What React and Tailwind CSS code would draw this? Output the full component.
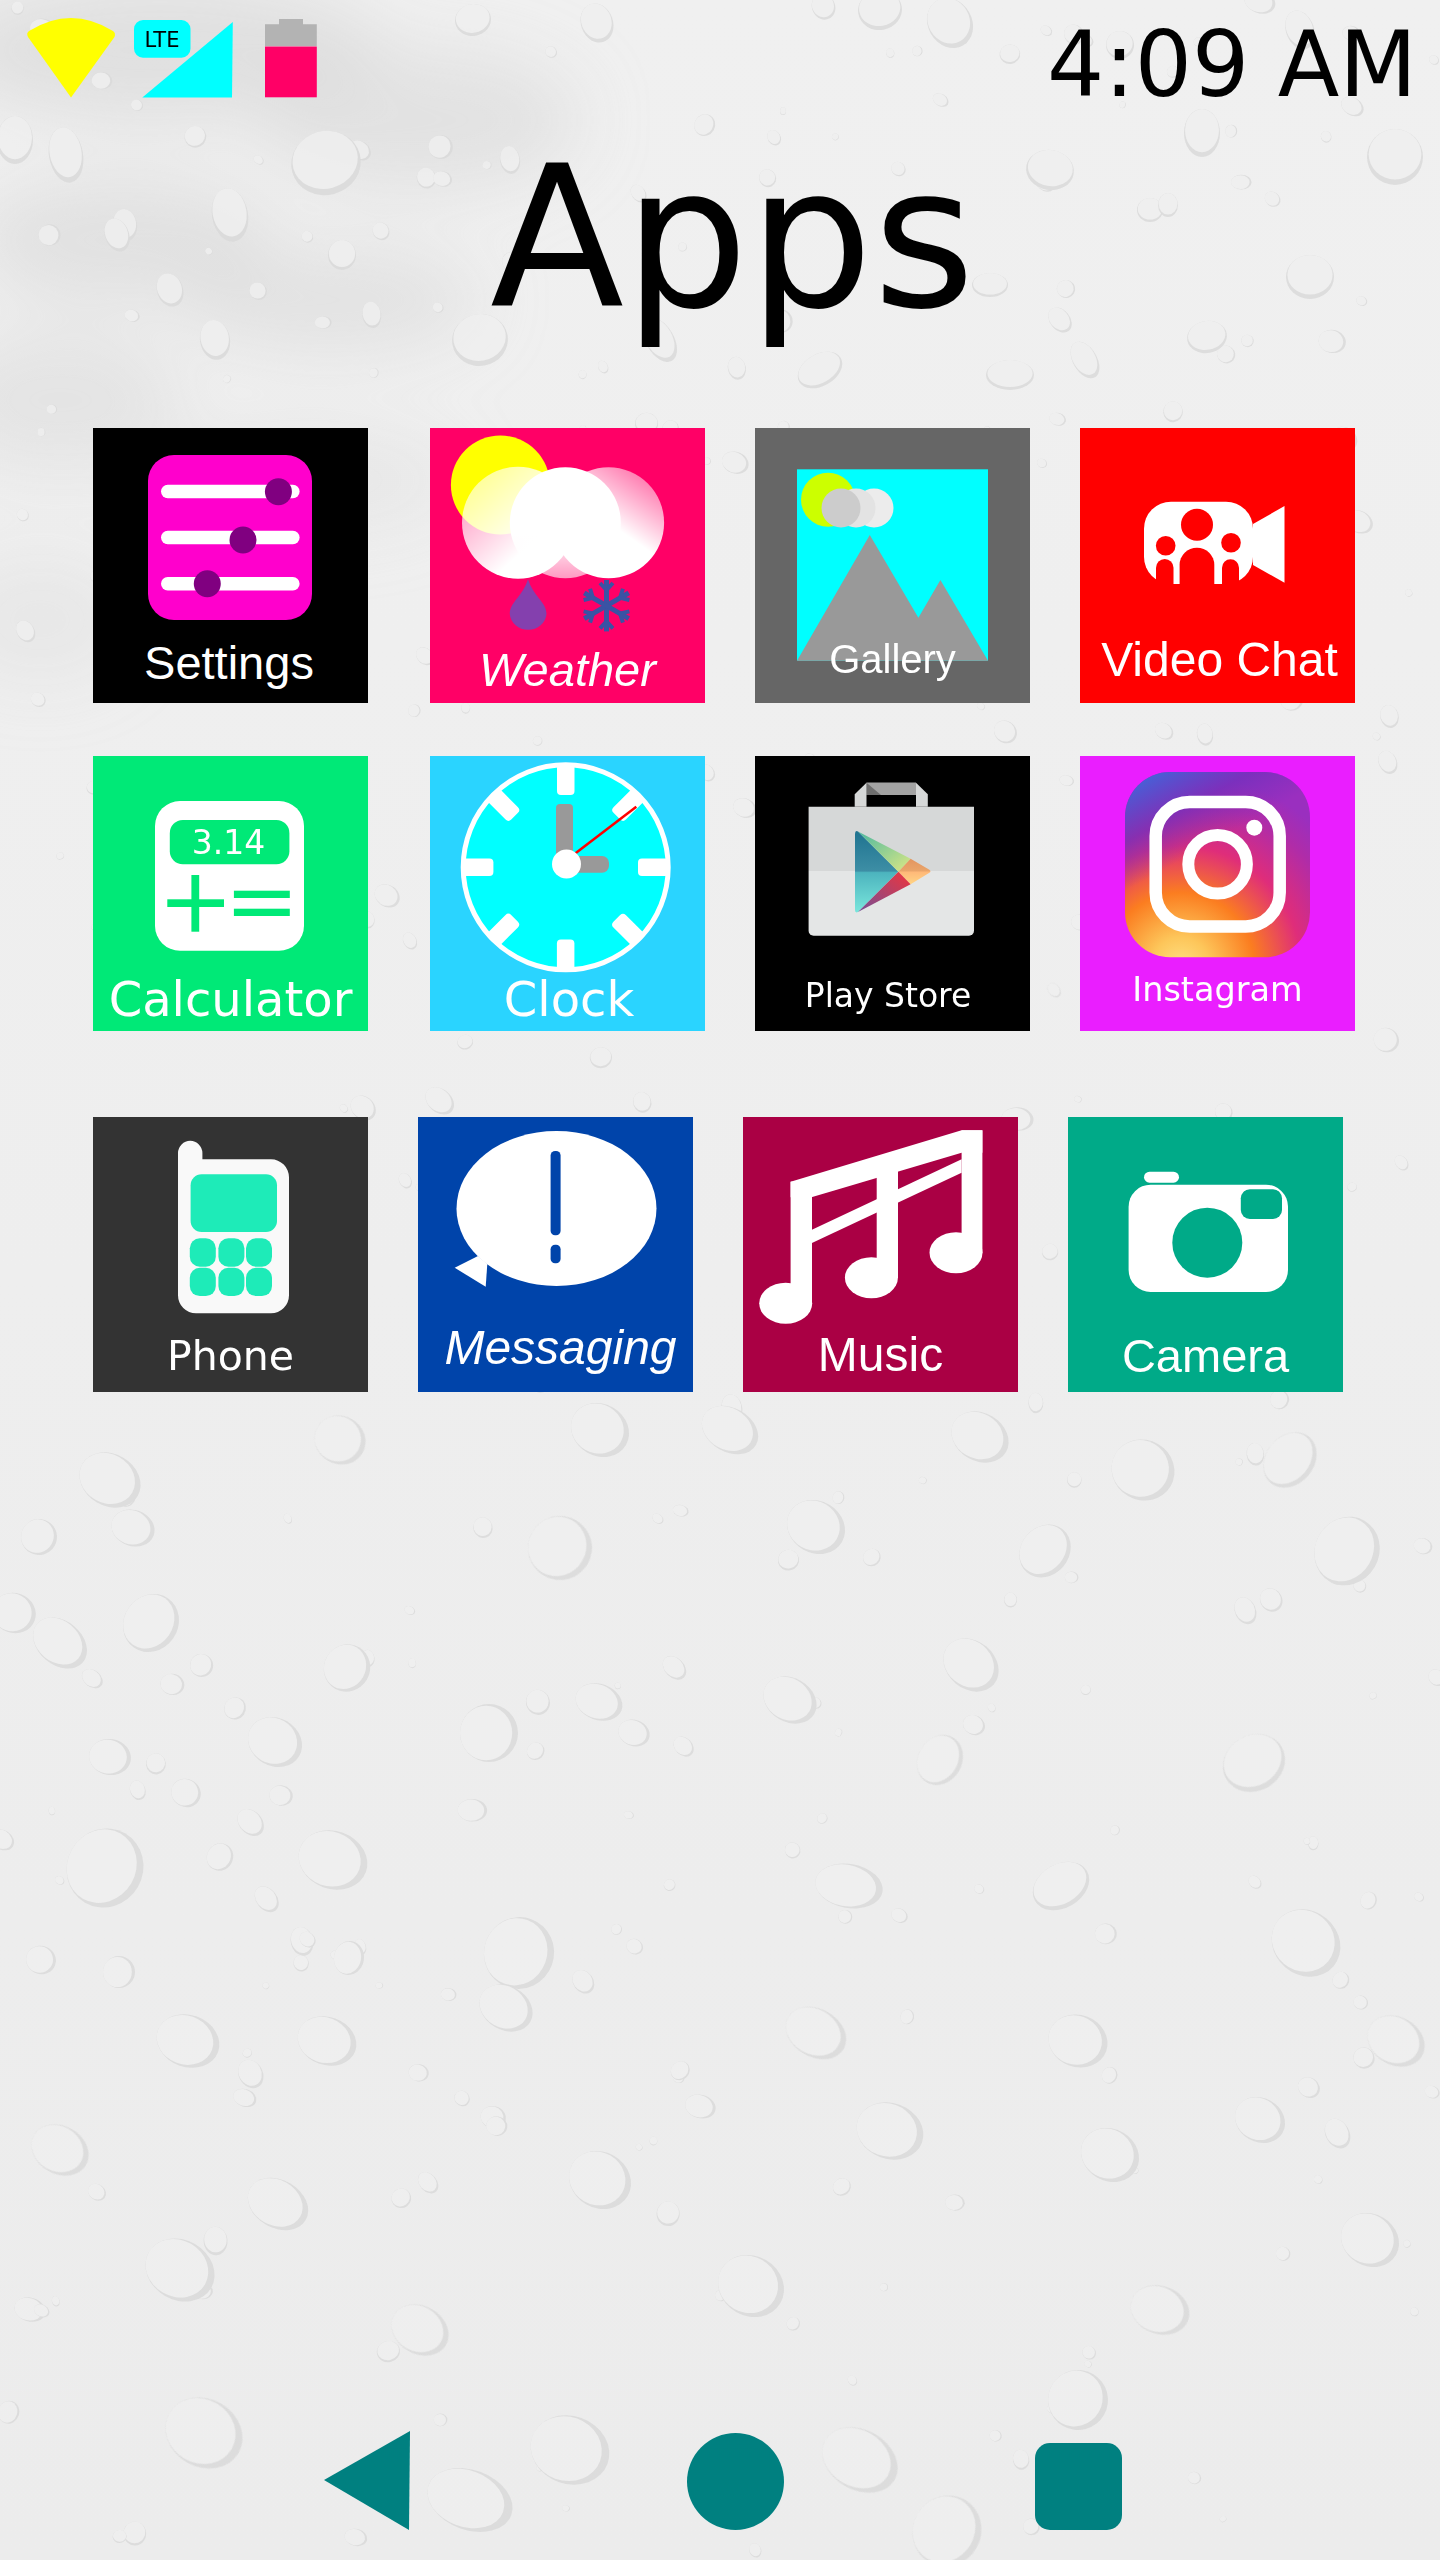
const DEJAVU = "font-['DejaVu_Sans',sans-serif]";
const LIBERATION = "font-['Liberation_Sans',sans-serif]";

// big droplets of the wallpaper: x, y, rx, ry, rotation of the shaded rim
const bigDrops = [
  [326, 163, 35, 32, -15], [473, 20, 18, 16, -10], [597, 23, 16, 20, -20], [66, 155, 17, 28, -10], [125, 225, 12, 16, -10],
  [230, 215, 18, 27, -10], [117, 235, 12, 17, -20], [15, 140, 18, 24, 0], [342, 255, 14, 15, 0], [170, 290, 13, 17, -20],
  [480, 340, 28, 26, -10], [215, 340, 15, 20, -10], [660, 340, 14, 24, -30], [510, 160, 10, 14, -10], [880, 10, 22, 20, -10],
  [950, 23, 22, 26, -30], [1050, 170, 24, 20, 10], [1202, 133, 18, 24, 0], [1395, 157, 28, 28, 0], [1310, 277, 24, 22, 0],
  [1207, 337, 20, 16, -10], [1060, 320, 10, 14, -40], [1150, 210, 13, 12, 0], [1168, 205, 10, 12, 0], [820, 370, 24, 16, -30],
  [1010, 375, 24, 15, 0], [1085, 360, 12, 20, -30], [990, 285, 18, 12, 0], [1300, 30, 14, 20, -20], [1120, 45, 14, 14, -20],
  [560, 1548, 32, 32, -60], [133, 1528, 18, 22, -70], [39, 1537, 18, 18, -60], [151, 1623, 30, 27, -55], [60, 1643, 22, 30, -50],
  [14, 1613, 20, 22, -70], [347, 1668, 24, 23, -60], [489, 1733, 29, 29, -90], [599, 1702, 18, 24, -70], [634, 1733, 13, 16, -70],
  [275, 1742, 24, 28, -60], [110, 1757, 18, 21, -80], [186, 1793, 14, 15, -60], [105, 1868, 40, 38, -60], [333, 1860, 29, 35, -70],
  [220, 1857, 14, 13, -60], [519, 1953, 36, 35, -70], [349, 1958, 17, 15, -80], [119, 1972, 16, 16, -90], [41, 1960, 14, 15, -70],
  [1347, 1551, 35, 32, -60], [1254, 1763, 32, 28, -30], [849, 1886, 22, 34, -80], [1061, 1886, 30, 22, -30], [1306, 1943, 32, 36, -50],
  [188, 2041, 26, 32, -70], [327, 2041, 24, 30, -70], [506, 2008, 22, 28, -60], [816, 2033, 24, 32, -60], [1078, 2041, 26, 30, -70],
  [1396, 2041, 24, 30, -60], [278, 2204, 24, 32, -60], [180, 2270, 30, 36, -60], [751, 2286, 30, 34, -60], [1110, 2155, 26, 30, -60],
  [890, 2131, 28, 34, -70], [947, 2531, 36, 34, -60], [204, 2433, 34, 40, -60], [1078, 2400, 30, 30, -60], [971, 1665, 24, 30, -50],
  [816, 1527, 26, 30, -60], [1045, 1551, 28, 24, -50], [1143, 1470, 30, 32, -60], [980, 1437, 24, 30, -60], [1290, 1460, 30, 24, -50],
  [570, 2450, 34, 40, -70], [470, 2500, 30, 44, -70], [860, 2460, 30, 40, -60], [1160, 2310, 24, 30, -70], [1370, 2240, 26, 30, -60],
  [600, 2180, 28, 32, -60], [420, 2330, 24, 30, -60], [60, 2150, 24, 30, -60], [1260, 2120, 22, 26, -60], [730, 1430, 22, 30, -60],
  [110, 1480, 26, 32, -60], [340, 1440, 24, 26, -60], [600, 1430, 26, 30, -60], [940, 1760, 26, 22, -60], [790, 1700, 22, 28, -60],
];

// scatter of tiny droplets, fixed seed so the page looks the same each load
function smallDrops(count) {
  let seed = 41;
  const next = () => {
    seed = (seed * 16807) % 2147483647;
    return seed / 2147483647;
  };
  const out = [];
  for (let i = 0; i < count; i++) {
    const r = 3 + next() * 9;
    out.push([next() * 1440, next() * 2560, r, r * (0.9 + next() * 0.5), -next() * 90]);
  }
  return out;
}

function Drop({ d }) {
  const [x, y, rx, ry, rot] = d;
  return (
    <g transform={`translate(${x} ${y}) rotate(${rot})`}>
      <ellipse rx={rx} ry={ry} fill="#dadada" />
      <ellipse cy={-ry * 0.1} rx={rx * 0.94} ry={ry * 0.9} fill="#efefef" />
    </g>
  );
}

function Wallpaper() {
  return (
    <svg className="absolute inset-0 h-full w-full" viewBox="0 0 1440 2560" preserveAspectRatio="none">
      <defs>
        <filter id="soft" x="-50%" y="-50%" width="200%" height="200%">
          <feGaussianBlur stdDeviation="34" />
        </filter>
        <linearGradient id="paper" x1="0" y1="0" x2="0" y2="1">
          <stop offset="0" stopColor="#f0f0f0" />
          <stop offset="1" stopColor="#ececec" />
        </linearGradient>
      </defs>
      <rect width="1440" height="2560" fill="url(#paper)" />
      <g filter="url(#soft)" fill="#d6d6d6">
        <ellipse cx="160" cy="50" rx="220" ry="70" opacity="0.6" />
        <ellipse cx="420" cy="120" rx="160" ry="70" opacity="0.5" />
        <ellipse cx="120" cy="240" rx="150" ry="60" opacity="0.55" />
        <ellipse cx="330" cy="300" rx="150" ry="50" opacity="0.5" />
        <ellipse cx="60" cy="400" rx="120" ry="70" opacity="0.45" />
        <ellipse cx="300" cy="480" rx="160" ry="50" opacity="0.3" />
        <ellipse cx="40" cy="620" rx="90" ry="60" opacity="0.3" />
      </g>
      <g opacity="0.85">
        {smallDrops(340).map((d, i) => (
          <Drop key={i} d={d} />
        ))}
        {bigDrops.map((d, i) => (
          <Drop key={i} d={d} />
        ))}
      </g>
    </svg>
  );
}

function StatusIcons() {
  return (
    <svg className="h-[100px] w-[330px]" viewBox="0 0 330 100">
      <path d="M71 97.500L28 37Q26 33 29 31Q71 5 113 31Q116 33 114.500 37Z" fill="#ffff00" />
      <path d="M232.800 22L232 97.500H142.300Z" fill="#00ffff" />
      <rect x="134" y="20" width="56.500" height="37.700" rx="9" fill="#00ffff" />
      <text x="162" y="46.700" textAnchor="middle" textLength="35" lengthAdjust="spacingAndGlyphs" fontSize="22" fontFamily="DejaVu Sans, sans-serif" fill="#000">
        LTE
      </text>
      <path d="M279 24.300V19H303V24.300H316.800V46H265V24.300Z" fill="#b3b3b3" />
      <rect x="265" y="46.500" width="51.800" height="50.800" fill="#ff0066" />
    </svg>
  );
}

function SettingsIcon() {
  return (
    <>
      <rect x="55" y="27" width="164" height="165" rx="26" fill="#ff00cc" />
      {[56.700, 102.700, 149].map((y) => (
        <rect key={y} x="68" y={y} width="138.600" height="13.500" rx="6.700" fill="#fff" />
      ))}
      <circle cx="185.400" cy="63.700" r="13.500" fill="#800080" />
      <circle cx="150" cy="112" r="13.500" fill="#800080" />
      <circle cx="114.300" cy="155.700" r="13.500" fill="#800080" />
    </>
  );
}

function WeatherIcon() {
  return (
    <>
      <defs>
        <linearGradient id="cloudL" x1="0.1" y1="0.15" x2="0.6" y2="0.7">
          <stop offset="0" stopColor="#fff" stopOpacity="0.6" />
          <stop offset="1" stopColor="#fff" />
        </linearGradient>
        <linearGradient id="cloudM" x1="0.5" y1="0.6" x2="0.5" y2="1">
          <stop offset="0" stopColor="#fff" />
          <stop offset="1" stopColor="#fff" stopOpacity="0.6" />
        </linearGradient>
        <linearGradient id="cloudR" x1="0.85" y1="0" x2="0.5" y2="0.5">
          <stop offset="0" stopColor="#fff" stopOpacity="0.4" />
          <stop offset="1" stopColor="#fff" />
        </linearGradient>
      </defs>
      <circle cx="70.400" cy="57" r="49.500" fill="#ffff00" />
      <circle cx="88" cy="94.700" r="56" fill="url(#cloudL)" />
      <circle cx="178.600" cy="94.700" r="55.500" fill="url(#cloudR)" />
      <circle cx="135.300" cy="94.700" r="55.500" fill="url(#cloudM)" />
      <path d="M98 151C93 168 79.800 174 79.800 186A18.400 17 0 0 0 116.500 186C116.500 174 103 168 98 151Z" fill="#8440ae" />
      <g stroke="#3a53a4" strokeWidth="5" fill="none">
        {[0, 60, 120].map((a) => (
          <g key={a} transform={`rotate(${a} 176.500 177.700)`}>
            <path d="M176.500 152V203.400" />
            <path d="M170 155L176.500 162L183 155M170 200.400L176.500 193.400L183 200.400" strokeWidth="4" />
          </g>
        ))}
      </g>
    </>
  );
}

function GalleryIcon() {
  return (
    <>
      <rect x="42" y="41.300" width="191" height="191.400" fill="#00ffff" />
      <circle cx="73" cy="71.700" r="27" fill="#ccff00" />
      <circle cx="119" cy="80" r="19.500" fill="#ececec" />
      <circle cx="101" cy="80" r="19.500" fill="#e3e3e3" />
      <circle cx="86" cy="80" r="19.500" fill="#cccccc" />
      <path d="M42 232.700L114.800 107L163.400 189.700L185.400 152L233 232.700Z" fill="#999999" />
    </>
  );
}

function VideoIcon() {
  return (
    <>
      <path d="M173 96L204.500 78V154.700L173 137Z" fill="#fff" />
      <rect x="64" y="73.700" width="109" height="82.300" rx="27" fill="#fff" />
      <g fill="#ff0000">
        <circle cx="117" cy="96.800" r="16" />
        <circle cx="85.700" cy="117.700" r="9.800" />
        <circle cx="151" cy="114.700" r="9.800" />
        <path d="M99.600 156.500V137A17.300 17.300 0 0 1 134.300 137V156.500Z" />
        <path d="M76 156.500V139.700A8.700 8.700 0 0 1 93.500 139.700V156.500Z" />
        <path d="M142 156.500V139.700A8.500 8.500 0 0 1 159 139.700V156.500Z" />
      </g>
    </>
  );
}

function CalculatorIcon() {
  return (
    <>
      <rect x="62" y="45" width="149" height="149.700" rx="25" fill="#fff" />
      <rect x="76.800" y="64" width="119.600" height="44.300" rx="13" fill="#00e977" />
      <text x="135.600" y="98.300" textAnchor="middle" fontSize="33" fontFamily="DejaVu Sans, sans-serif" fill="#fff">
        3.14
      </text>
      <g fill="#00e977">
        <rect x="98.400" y="119" width="7.800" height="56.700" />
        <rect x="74.300" y="143.300" width="56.700" height="7.700" />
        <rect x="140.900" y="134.700" width="55.900" height="7.300" />
        <rect x="140.900" y="152.700" width="55.900" height="7.300" />
      </g>
    </>
  );
}

function ClockIcon() {
  return (
    <>
      <circle cx="135.700" cy="111.300" r="102.500" fill="#00ffff" stroke="#fff" strokeWidth="5" />
      {[0, 45, 90, 135, 180, 225, 270, 315].map((a) => (
        <rect key={a} x="127" y="8" width="17.500" height="31" rx="4" fill="#fff" transform={`rotate(${a} 135.700 111.300)`} />
      ))}
      <rect x="126" y="48" width="17" height="60" rx="4" fill="#999999" />
      <rect x="130" y="100" width="49" height="16.700" rx="7" fill="#999999" />
      <path d="M145.500 97.300L206.300 50.700" stroke="#ff0000" strokeWidth="2.500" />
      <circle cx="136.500" cy="108" r="14.500" fill="#fff" />
    </>
  );
}

function PlayStoreIcon() {
  return (
    <>
      <defs>
        <linearGradient id="playL" x1="0" y1="0" x2="0" y2="1">
          <stop offset="0" stopColor="#1f7390" />
          <stop offset="0.49" stopColor="#3d8ea5" />
          <stop offset="0.51" stopColor="#4cb4be" />
          <stop offset="1" stopColor="#7ae6dc" />
        </linearGradient>
        <linearGradient id="playT" x1="0" y1="0" x2="1" y2="1">
          <stop offset="0" stopColor="#4cb8a0" />
          <stop offset="1" stopColor="#dce884" />
        </linearGradient>
        <linearGradient id="playR" x1="0" y1="0" x2="0" y2="1">
          <stop offset="0" stopColor="#e39560" />
          <stop offset="0.49" stopColor="#eaa56a" />
          <stop offset="0.51" stopColor="#ffb878" />
          <stop offset="1" stopColor="#ffd585" />
        </linearGradient>
        <linearGradient id="playB" x1="1" y1="0" x2="0" y2="1">
          <stop offset="0" stopColor="#f0343c" />
          <stop offset="1" stopColor="#744f96" />
        </linearGradient>
      </defs>
      <path d="M99.700 50.700V38.300L111.500 26.700H161L172.800 38.300V50.700Z" fill="#d6d8d8" />
      <path d="M111.500 26.700H161V39H111.500Z" fill="#a3a3a3" />
      <path d="M111.500 26.700L126 39H111.500Z" fill="#6f6f6f" />
      <rect x="111.500" y="39" width="49.500" height="12" fill="#000" />
      <path d="M53.600 50.700H219V115H53.600Z" fill="#d6d8d8" />
      <path d="M53.600 115H219V174.700A5 5 0 0 1 214 179.700H58.600A5 5 0 0 1 53.600 174.700Z" fill="#e4e6e6" />
      <path d="M100 78Q100 74 103 75.500L143.400 115.700L103 156Q100 157.500 100 154Z" fill="url(#playL)" />
      <path d="M103 75.500L155.600 102.700L143.400 115.700Z" fill="url(#playT)" />
      <path d="M155.600 102.700L174 113.500Q177 115.300 174 117L155.600 128.300L143.400 115.700Z" fill="url(#playR)" />
      <path d="M143.400 115.700L155.600 128.300L103 156Z" fill="url(#playB)" />
    </>
  );
}

function InstagramIcon() {
  return (
    <>
      <defs>
        <radialGradient id="igWarm" cx="0.3" cy="1.05" r="1.05">
          <stop offset="0" stopColor="#ffe083" />
          <stop offset="0.15" stopColor="#fdc65a" />
          <stop offset="0.38" stopColor="#fb7d20" />
          <stop offset="0.62" stopColor="#df2d7a" />
          <stop offset="0.85" stopColor="#b02ca8" />
          <stop offset="1" stopColor="#9a2fbf" />
        </radialGradient>
        <linearGradient id="igCool" x1="0.1" y1="0" x2="0.35" y2="0.45">
          <stop offset="0" stopColor="#3f68db" />
          <stop offset="0.55" stopColor="#7030bd" stopOpacity="0.75" />
          <stop offset="1" stopColor="#7030bd" stopOpacity="0" />
        </linearGradient>
      </defs>
      <rect x="45" y="16" width="185" height="185.300" rx="45" fill="url(#igWarm)" />
      <rect x="45" y="16" width="185" height="185.300" rx="45" fill="url(#igCool)" />
      <rect x="75.700" y="46" width="124" height="124.500" rx="34" fill="none" stroke="#fff" strokeWidth="12.500" />
      <circle cx="137.600" cy="108.300" r="29.300" fill="none" stroke="#fff" strokeWidth="12" />
      <circle cx="174.300" cy="71.700" r="8" fill="#fff" />
    </>
  );
}

function PhoneIcon() {
  const xs = [96.800, 125.400, 153];
  const ys = [121.300, 150.700];
  return (
    <>
      <path d="M85 36A12.200 12.200 0 0 1 109.400 36V42.300H178A18 18 0 0 1 196 60.300V178.300A18 18 0 0 1 178 196.300H103A18 18 0 0 1 85 178.300Z" fill="#f9f9f9" />
      <rect x="97.600" y="57.300" width="86.400" height="57.700" rx="11" fill="#1eebb8" />
      {ys.map((y) =>
        xs.map((x) => <rect key={`${x}-${y}`} x={x} y={y} width="26" height="28.400" rx="10" fill="#1eebb8" />)
      )}
    </>
  );
}

function MessagingIcon() {
  return (
    <>
      <ellipse cx="138.500" cy="91.500" rx="100" ry="77.500" fill="#fff" />
      <path d="M60 139L36.700 150.700L67.700 169.700L69.300 147Z" fill="#fff" />
      <rect x="132.600" y="34" width="10" height="84.300" rx="4.500" fill="#0044aa" />
      <rect x="132.600" y="127.700" width="10" height="18.600" rx="4.500" fill="#0044aa" />
    </>
  );
}

function MusicIcon() {
  return (
    <g fill="#fff">
      <path d="M47.600 64.700L218.600 13.300H239.400V35.700H218.600L68.400 80.300H47.600Z" />
      <path d="M68.400 113L218.600 42.300V55.700L68.400 126.300Z" />
      <rect x="47.600" y="64.700" width="21.400" height="122" />
      <rect x="133.700" y="40" width="21.300" height="121" />
      <rect x="218.600" y="13.300" width="20.800" height="123" />
      <ellipse cx="42.700" cy="186.300" rx="26.500" ry="20.500" />
      <ellipse cx="128.400" cy="160.700" rx="26.500" ry="20.500" />
      <ellipse cx="213" cy="135.700" rx="26.500" ry="20.500" />
    </g>
  );
}

function CameraIcon() {
  return (
    <>
      <rect x="76" y="54.700" width="35" height="11" rx="5.500" fill="#fff" />
      <rect x="60.600" y="67.700" width="159.400" height="107.300" rx="22" fill="#fff" />
      <circle cx="139.300" cy="125.700" r="35" fill="#00aa88" />
      <rect x="172.800" y="72.300" width="41.200" height="29.700" rx="9" fill="#00aa88" />
    </>
  );
}

function Tile({ bg, label, labelClass, pad, icon, extra = '' }) {
  return (
    <div className={`relative flex h-[275px] w-[275px] shrink-0 flex-col items-center justify-end ${bg} ${pad} ${extra}`}>
      <svg className="absolute inset-0 h-full w-full" viewBox="0 0 275 275">
        {icon}
      </svg>
      <span className={`relative leading-none whitespace-nowrap text-white ${labelClass}`}>{label}</span>
    </div>
  );
}

export default function App() {
  return (
    <div className="relative flex min-h-[2560px] w-[1440px] flex-col overflow-hidden">
      <Wallpaper />

      {/* Status bar */}
      <div className="relative flex items-start justify-between pr-[23px]">
        <StatusIcons />
        <span className={`pt-[20px] text-[90px] leading-none text-black ${DEJAVU}`}>4:09 AM</span>
      </div>

      <h1 className={`relative mt-[30px] pl-[490px] text-[196px] leading-none font-normal text-black ${DEJAVU}`}>Apps</h1>

      {/* App grid */}
      <div className="relative mt-[92px] flex flex-col pl-[93px]">
        <div className="flex gap-[50px]">
          <Tile bg="bg-black" label="Settings" labelClass={`text-[47px] ${LIBERATION}`} pad="pb-[17px] pr-[3px]" icon={<SettingsIcon />} />
          <Tile bg="bg-[#ff0066]" label="Weather" labelClass={`text-[47px] italic ${LIBERATION}`} pad="pb-[10px]" extra="ml-[12px]" icon={<WeatherIcon />} />
          <Tile bg="bg-[#666666]" label="Gallery" labelClass={`text-[40px] ${LIBERATION}`} pad="pb-[24px]" icon={<GalleryIcon />} />
          <Tile bg="bg-[#ff0000]" label="Video Chat" labelClass={`text-[48px] ${LIBERATION}`} pad="pb-[19px] pl-[4px]" icon={<VideoIcon />} />
        </div>
        <div className="mt-[53px] flex gap-[50px]">
          <Tile bg="bg-[#00e977]" label="Calculator" labelClass={`text-[48px] ${DEJAVU}`} pad="pb-[8px]" icon={<CalculatorIcon />} />
          <Tile bg="bg-[#2ad4ff]" label="Clock" labelClass={`text-[48px] ${DEJAVU}`} pad="pb-[8px] pl-[3px]" extra="ml-[12px]" icon={<ClockIcon />} />
          <Tile bg="bg-black" label="Play Store" labelClass={`text-[33px] ${DEJAVU}`} pad="pb-[19px] pr-[9px]" icon={<PlayStoreIcon />} />
          <Tile bg="bg-[#ea1eff]" label="Instagram" labelClass={`text-[33.500px] ${DEJAVU}`} pad="pb-[25px]" icon={<InstagramIcon />} />
        </div>
        <div className="mt-[86px] flex gap-[50px]">
          <Tile bg="bg-[#333333]" label="Phone" labelClass={`text-[41px] ${DEJAVU}`} pad="pb-[15px]" icon={<PhoneIcon />} />
          <Tile bg="bg-[#0044aa]" label="Messaging" labelClass={`text-[48px] italic ${LIBERATION}`} pad="pb-[20px] pl-[10px]" icon={<MessagingIcon />} />
          <Tile bg="bg-[#aa0044]" label="Music" labelClass={`text-[48px] ${LIBERATION}`} pad="pb-[13px]" icon={<MusicIcon />} />
          <Tile bg="bg-[#00aa88]" label="Camera" labelClass={`text-[47px] ${LIBERATION}`} pad="pb-[13px]" icon={<CameraIcon />} />
        </div>
      </div>

      {/* Nav buttons */}
      <div className="relative mt-auto flex items-end pb-[30px] pl-[324px]">
        <svg className="h-[99px] w-[86px]" viewBox="0 0 86 99">
          <path d="M0 49L86 0L85 99Z" fill="#008080" />
        </svg>
        <div className="ml-[277px] h-[97px] w-[97px] rounded-full bg-[#008080]" />
        <div className="ml-[251px] h-[87px] w-[87px] rounded-[15px] bg-[#008080]" />
      </div>
    </div>
  );
}
